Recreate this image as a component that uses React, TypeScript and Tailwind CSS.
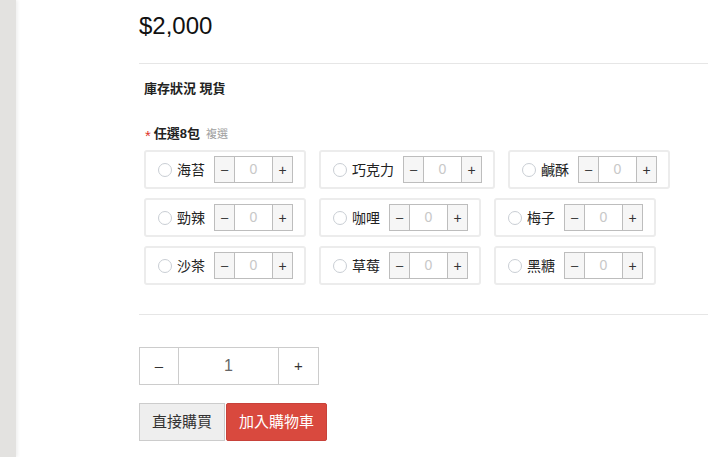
import { useState } from "react";

const FLAVORS = ["海苔", "巧克力", "鹹酥", "勁辣", "咖哩", "梅子", "沙茶", "草莓", "黑糖"];

const font = { fontFamily: '"Liberation Sans", "Noto Sans CJK TC", Arial, sans-serif' };

function FlavorOption({ name }: { name: string }) {
  const [count, setCount] = useState(0);
  return (
    <div className="flex h-[39px] items-center rounded-[3px] border-2 border-[#ececec] pl-[12px] pr-[11px]">
      <span className="h-[14px] w-[14px] shrink-0 rounded-full border border-[#c9ced4] bg-white" />
      <span className="ml-[5px] text-[14px] leading-[20px] text-[#222]">{name}</span>
      <div className="ml-[9px] flex h-[27px]">
        <button
          onClick={() => setCount((c) => Math.max(0, c - 1))}
          className="flex w-[21px] items-center justify-center border border-[#bdbdbd] bg-[#f6f6f6] text-[13px] leading-none text-[#333]"
        >
          –
        </button>
        <div className="flex w-[37px] items-center justify-center border-y border-[#bdbdbd] bg-white text-[14px] text-[#c8c8c8]">
          {count}
        </div>
        <button
          onClick={() => setCount((c) => c + 1)}
          className="flex w-[21px] items-center justify-center border border-[#bdbdbd] bg-[#f6f6f6] text-[14px] leading-none text-[#333]"
        >
          +
        </button>
      </div>
    </div>
  );
}

export default function App() {
  const [qty, setQty] = useState(1);

  return (
    <div className="flex min-h-screen bg-white" style={font}>
      <div className="w-[16px] shrink-0 bg-[#e3e2e0] shadow-[2px_0_3px_rgba(0,0,0,0.06)]" />

      <div className="flex-1 pl-[123px] pr-[11px]">
        <div className="pt-[10px] text-[24px] leading-[32px] text-[#111]">$2,000</div>

        <div className="mt-[21px] border-t border-[#e6e6e6]" />

        <div className="mt-[15px] pl-[5px] text-[13px] font-bold leading-[20px] text-[#222]">
          庫存狀況 現貨
        </div>

        <div className="mt-[25px] flex h-[20px] items-center pl-[6px] leading-[20px]">
          <span className="relative top-[2px] text-[15px] text-[#e0332b]">*</span>
          <span className="ml-[3px] text-[13px] font-bold text-[#222]">任選8包</span>
          <span className="ml-[6px] text-[11px] text-[#a0a0a0]">複選</span>
        </div>

        <div className="mt-[6px] flex flex-wrap gap-x-[13px] gap-y-[9px] pl-[5px]">
          {FLAVORS.map((f) => (
            <FlavorOption key={f} name={f} />
          ))}
        </div>

        <div className="mt-[29px] border-t border-[#e6e6e6]" />

        <div className="mt-[32px] flex h-[38px]">
          <button
            onClick={() => setQty((q) => Math.max(1, q - 1))}
            className="flex w-[40px] items-center justify-center border border-[#cccccc] bg-white text-[15px] text-[#333]"
          >
            –
          </button>
          <div className="flex w-[99px] items-center justify-center border-y border-[#cccccc] bg-white text-[16px] text-[#666]">
            {qty}
          </div>
          <button
            onClick={() => setQty((q) => q + 1)}
            className="flex w-[41px] items-center justify-center border border-[#cccccc] bg-white text-[15px] text-[#333]"
          >
            +
          </button>
        </div>

        <div className="mt-[18px] flex gap-[1px]">
          <button className="h-[38px] w-[86px] border border-[#cccccc] bg-[#eeeeee] text-[15px] text-[#333]">
            直接購買
          </button>
          <button className="h-[38px] w-[101px] rounded-[2px] border border-[#c8423a] bg-[#d9493e] text-[15px] text-white">
            加入購物車
          </button>
        </div>
      </div>
    </div>
  );
}
